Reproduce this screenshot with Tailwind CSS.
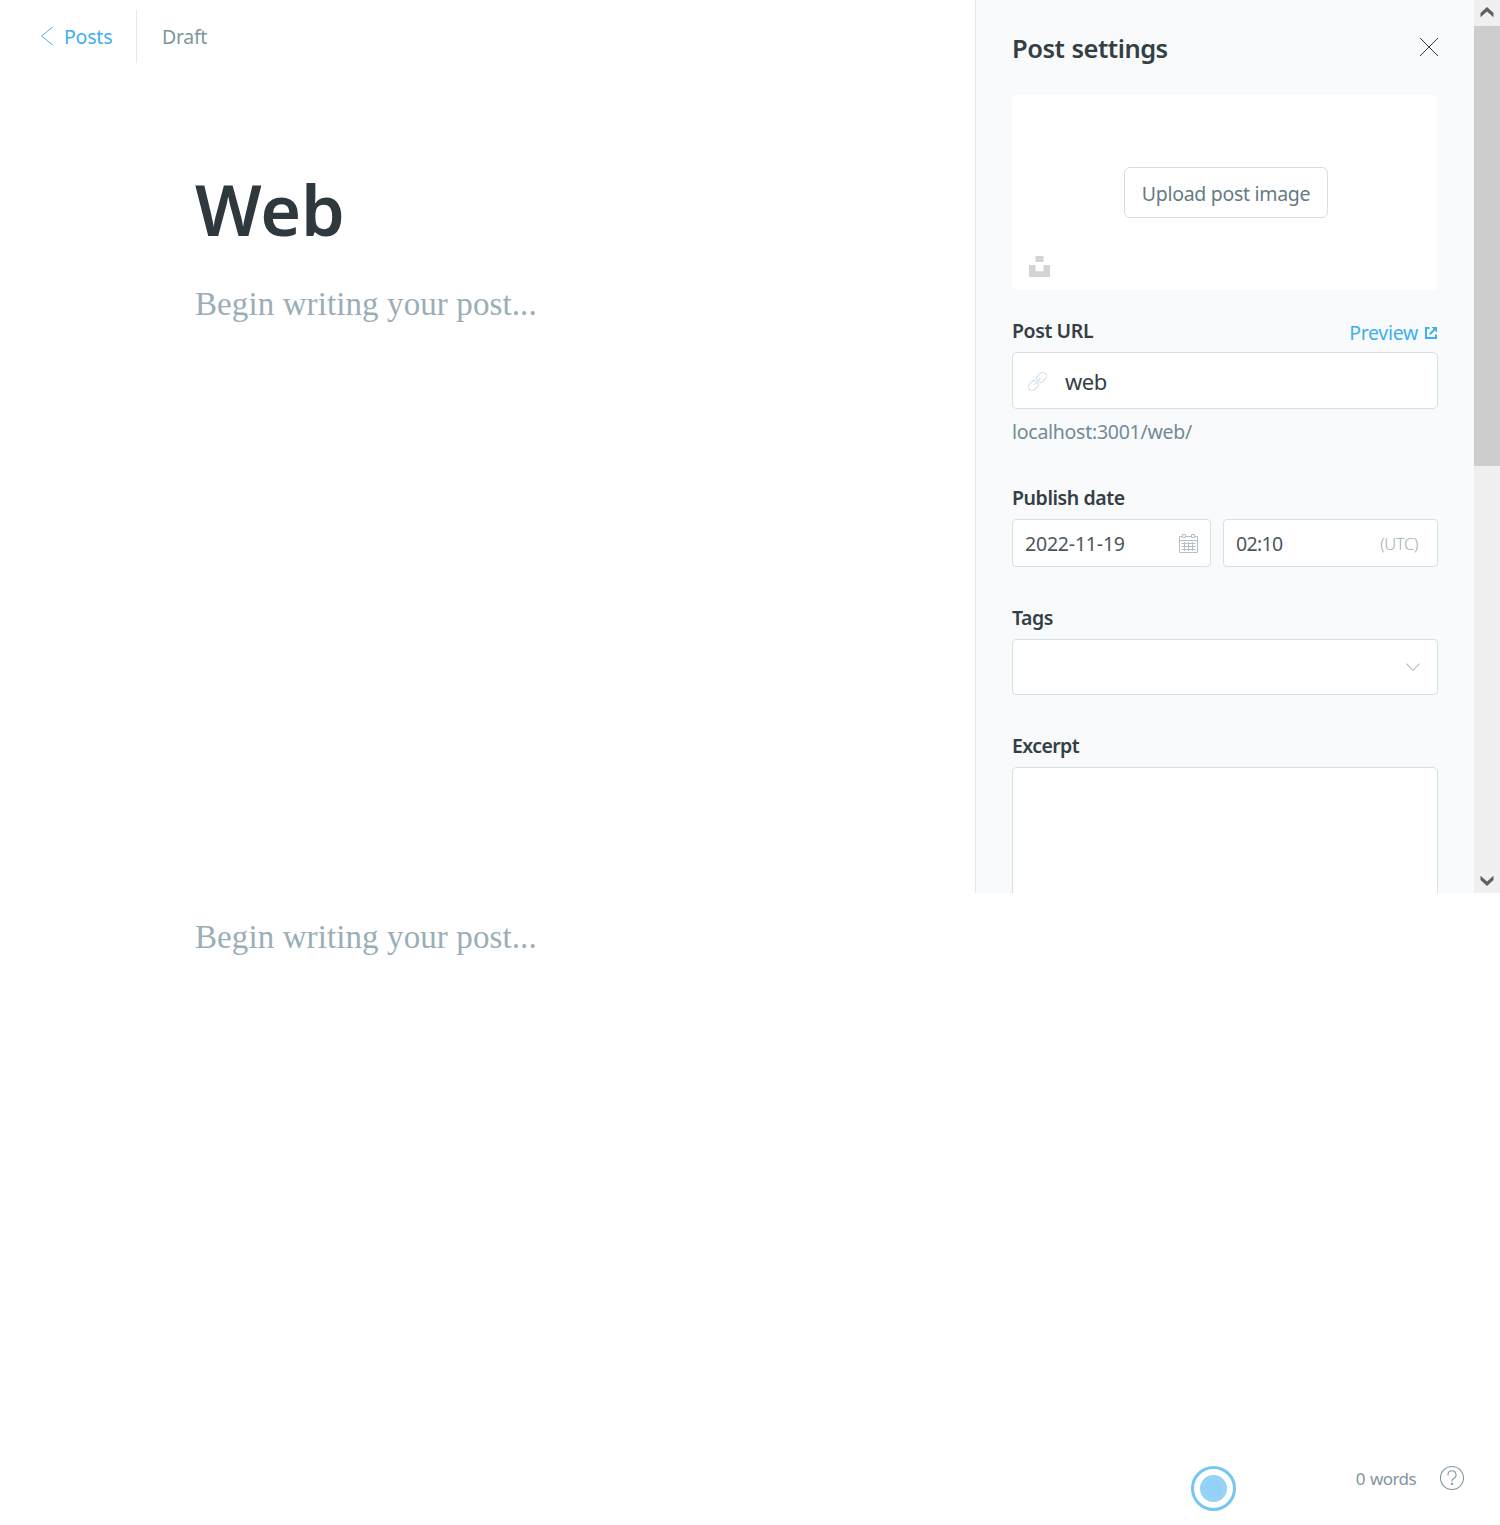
<!DOCTYPE html>
<html lang="en">
<head>
<meta charset="utf-8">
<title>Post settings</title>
<script src="https://cdn.jsdelivr.net/npm/@tailwindcss/browser@4"></script>
</head>
<body class="h-[1525px] overflow-hidden bg-white font-['Noto_Sans','Open_Sans',sans-serif] text-[19.5px] leading-[26px] text-[#343f44]">
<div class="flex h-[893px]">
  <main class="flex-1">
    <header class="flex h-[73px] items-center">
      <a class="flex h-[53px] w-[137px] items-center border-r border-[#dfe9f1] pl-10 text-[#3eb0ef]">
        <svg class="mr-[9px] mb-px h-5 w-[14px]" viewBox="0 0 14 20" fill="none" stroke="currentColor" stroke-width="1"><path d="M12.700 1 1.700 10l11 9"/></svg>
        <span class="pl-px tracking-[-0.2px]">Posts</span>
      </a>
      <span class="pl-[25px] tracking-[-0.3px] text-[#7f959e]">Draft</span>
    </header>
    <h1 class="mt-[89px] ml-[195px] text-[70px] leading-[94px] font-semibold tracking-[-0.1px] text-[#2e383d]">Web</h1>
    <p class="mt-[28px] ml-[195px] font-['Liberation_Serif',serif] text-[33px] leading-10 tracking-[0.1px] text-[#9baeb8]">Begin writing your post...</p>
  </main>
  <aside class="flex w-[499px] flex-col overflow-hidden border-l border-[#dfe9f1] bg-[#f8fafc] px-9">
    <div class="flex h-[95px] shrink-0 items-center justify-between">
      <h2 class="text-[25.5px] leading-8 font-semibold tracking-[-0.5px] [word-spacing:1px]">Post settings</h2>
      <svg class="mb-px h-5 w-5" viewBox="0 0 20 20" fill="none" stroke="#343f44" stroke-width="1"><path d="m2 1 18 18M20 1 2 19"/></svg>
    </div>
    <div class="flex h-[195px] shrink-0 flex-col items-center rounded-[5px] bg-white pt-[72px]">
      <button class="ml-[2px] h-[51px] w-[204px] rounded-md border border-[#d3dfe4] pt-[3px] tracking-[-0.3px] whitespace-nowrap text-[#667b84]">Upload post image</button>
      <svg class="mt-[38px] ml-[17px] h-[21px] w-[21px] self-start" viewBox="0 0 21 21" fill="#d3d3d3"><path d="M6.500 0h8v6h-8zM0 9h6.500v6.300h8V9H21v12H0z"/></svg>
    </div>
    <div class="mt-[28px] flex h-[34px] shrink-0 justify-between">
      <h3 class="font-semibold tracking-[-0.4px]">Post URL</h3>
      <a class="flex items-start gap-[7px] pt-[2px] pr-px text-[#3eb0ef]"><span class="tracking-[-0.3px]">Preview</span>
        <svg class="mt-[7px] h-3 w-3" viewBox="0 0 12 12" fill="none" stroke="currentColor" stroke-width="2"><path d="M4.500 1H1v10h10V7.500M4.800 7.200 9.500 2.500"/><path d="M6.500 0H12v5.500z" fill="currentColor" stroke="none"/></svg>
      </a>
    </div>
    <div class="flex h-[57px] shrink-0 items-center rounded-[5px] border border-[#d3e1eb] bg-white pl-[15px]">
      <svg class="mt-px h-[19px] w-[19px]" viewBox="0 0 20 20" fill="none" stroke="#cfdfea" stroke-width="1.1"><g transform="rotate(-45 10 10)"><path d="M9 10.800V11.500a2.300 2.300 0 0 1-2.300 2.300H.7a2.300 2.300 0 0 1-2.300-2.300v-3A2.300 2.300 0 0 1 .7 6.200h6A2.300 2.300 0 0 1 9 8.500M11 9.200V8.500a2.300 2.300 0 0 1 2.300-2.300h6a2.300 2.300 0 0 1 2.300 2.300v3a2.300 2.300 0 0 1-2.300 2.300h-6a2.300 2.300 0 0 1-2.300-2.300M5.500 10h9"/></g></svg>
      <span class="pl-[18px] text-[22px] tracking-[-0.5px]">web</span>
    </div>
    <p class="mt-[10px] shrink-0 tracking-[-0.27px] text-[#738a94]">localhost:3001/web/</p>
    <h3 class="mt-10 h-[34px] shrink-0 font-semibold tracking-[-0.42px]">Publish date</h3>
    <div class="flex h-12 shrink-0 gap-3 text-[#4a575e]">
      <div class="flex w-[199px] items-center justify-between rounded border border-[#d3e1eb] bg-white pr-3 pl-3">
        <span class="pt-px tracking-[-0.2px]">2022-11-19</span>
        <svg class="h-[19px] w-[19px]" viewBox="0 0 19 19" fill="none" stroke="#b4c0c7"><path d="M.5 2.500h18v16H.5zM.5 6.500h18M2.500 9.500h14M2.500 12.500h14M2.500 15.500h14M5.500 8v9M9.500 8v9M13.500 8v9"/><path d="M3.500.5h3v3h-3zM12.500.5h3v3h-3z" fill="white"/></svg>
      </div>
      <div class="flex flex-1 items-center justify-between rounded border border-[#d3e1eb] bg-white pr-[18px] pl-3">
        <span class="pt-px tracking-[-0.7px]">02:10</span>
        <span class="pt-px pr-px text-[16.5px] font-light tracking-[-0.4px] text-[#9fb0b9]">(UTC)</span>
      </div>
    </div>
    <h3 class="mt-[38px] h-[34px] shrink-0 font-semibold tracking-[-0.5px]">Tags</h3>
    <div class="flex h-14 shrink-0 items-center justify-end rounded border border-[#d3e1eb] bg-white pr-[17px]">
      <svg class="h-2 w-[14px]" viewBox="0 0 15 8" fill="none" stroke="#a9bac5" stroke-width="1.100"><path d="m.5.5 7 7 7-7"/></svg>
    </div>
    <h3 class="mt-[38px] h-[34px] shrink-0 font-semibold tracking-[-0.6px]">Excerpt</h3>
    <div class="h-[150px] shrink-0 rounded-[5px] border border-[#d3e1eb] bg-white"></div>
  </aside>
  <div class="flex w-[26px] flex-col items-center bg-[#f0f0f0]">
    <svg class="h-[26px] w-[26px]" viewBox="0 0 26 26" fill="#606060"><path d="m13 7 6.500 6v4.300L13 11.500l-6.500 5.800V13z"/></svg>
    <div class="h-[440px] w-full bg-[#cdcdcd]"></div>
    <svg class="mt-auto h-[26px] w-[26px]" viewBox="0 0 26 26" fill="#606060"><path d="m13 19 6.500-6V8.700L13 14.500 6.500 8.700V13z"/></svg>
  </div>
</div>
<p class="mt-[24px] ml-[195px] font-['Liberation_Serif',serif] text-[33px] leading-10 tracking-[0.1px] text-[#9baeb8]">Begin writing your post...</p>
<footer class="mt-[508px] flex justify-end pr-9">
  <svg class="mt-px h-[45px] w-[45px]" viewBox="0 0 45 45" fill="none"><circle cx="22.500" cy="22.500" r="21" stroke="#75c6f4" stroke-width="3"/><circle cx="22.500" cy="22.500" r="13.500" fill="#94d2f5"/><circle cx="22.500" cy="22.500" r="10.800" stroke="#a6daf7" stroke-width=".7"/></svg>
  <span class="ml-[119px] w-[61px] pt-px text-right text-[17px] tracking-[-0.6px] [word-spacing:1.5px] whitespace-nowrap text-[#7f959e]">0 words</span>
  <svg class="ml-[23px] h-[26px] w-[25px]" viewBox="0 0 25 26" fill="none" stroke="#7f959e" stroke-width="1.100"><circle cx="13" cy="13" r="11.500"/><path d="M9 10.500v-.7a4 4 0 1 1 5.700 3.600c-1.100.6-1.700 1.300-1.700 2.600v.5"/><circle cx="13" cy="18.900" r=".5" fill="#7f959e"/></svg>
</footer>
</body>
</html>
